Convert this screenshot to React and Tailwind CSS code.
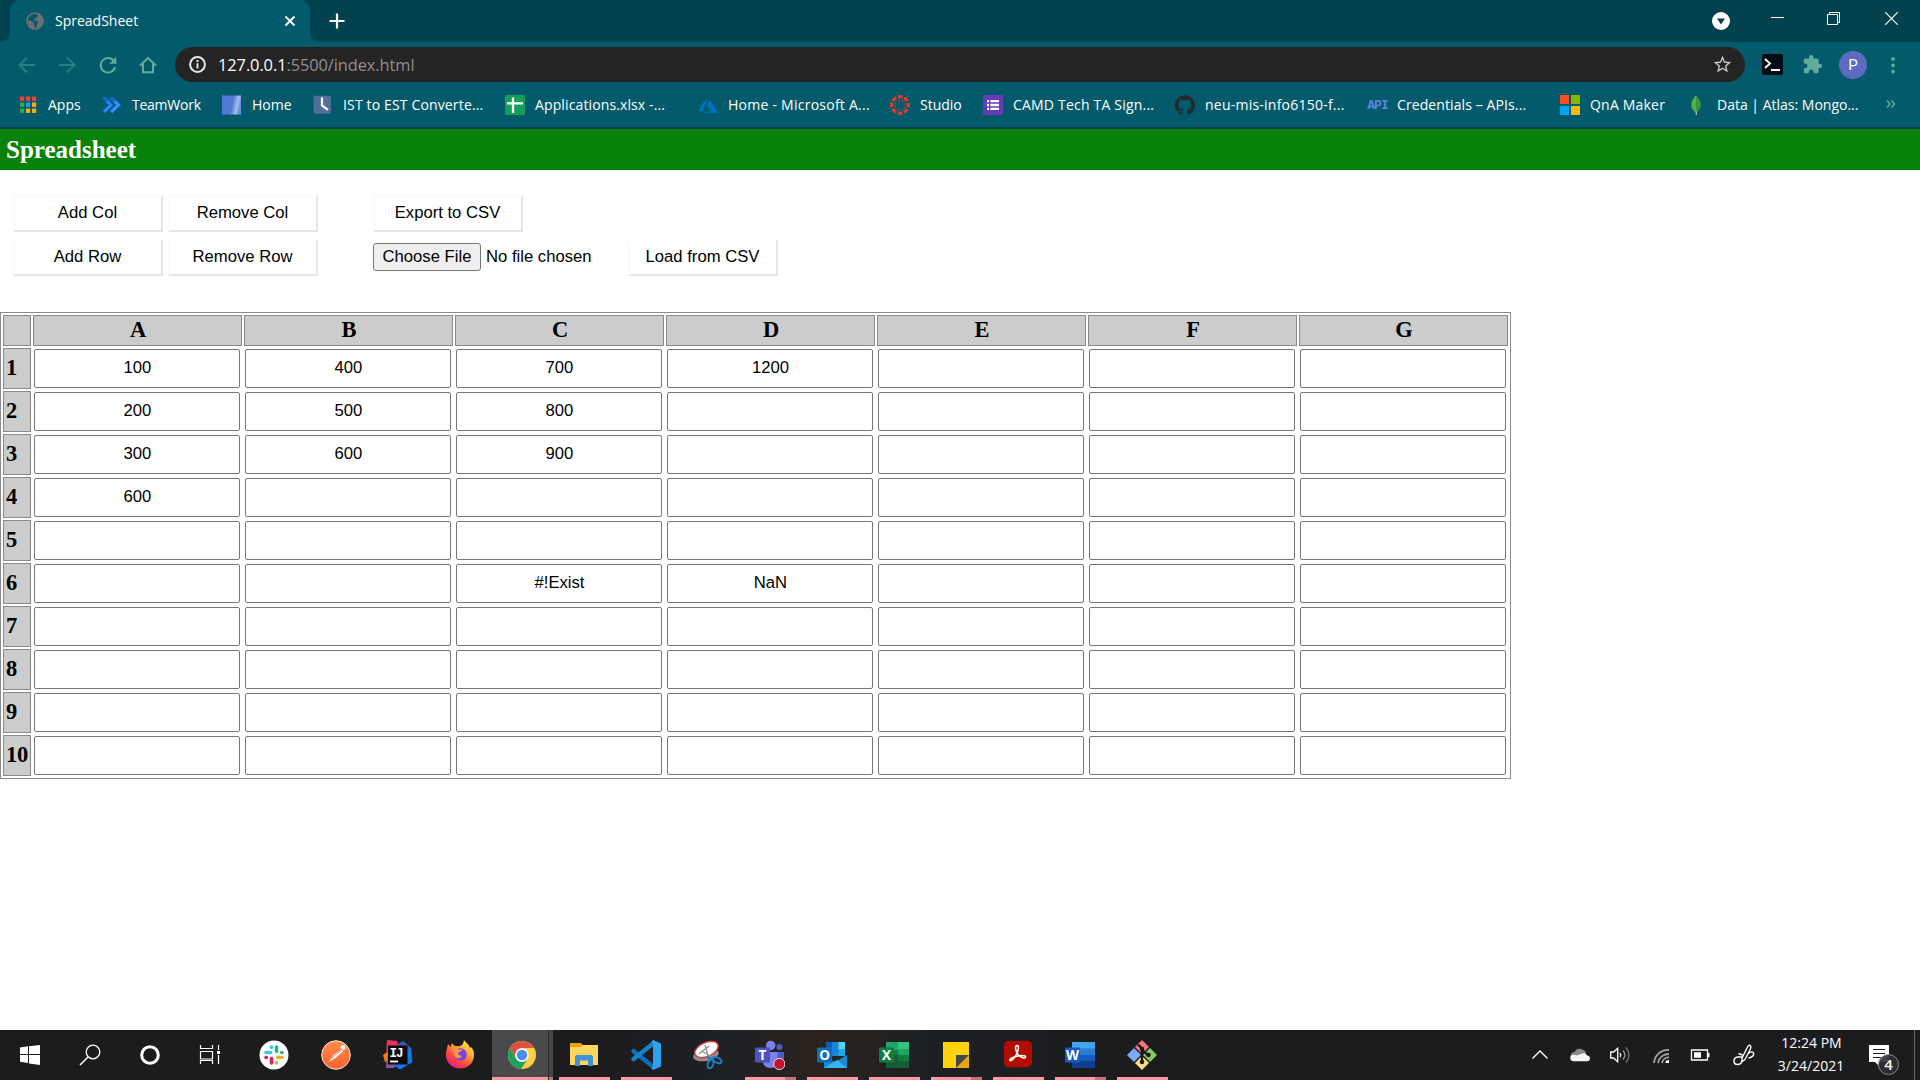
import React from "react";
import { SiGithub } from "react-icons/si";
import { MdExtension, MdStarBorder } from "react-icons/md";

const COLUMNS = ["A", "B", "C", "D", "E", "F", "G"];
const ROWS = [
  ["100", "400", "700", "1200", "", "", ""],
  ["200", "500", "800", "", "", "", ""],
  ["300", "600", "900", "", "", "", ""],
  ["600", "", "", "", "", "", ""],
  ["", "", "", "", "", "", ""],
  ["", "", "#!Exist", "NaN", "", "", ""],
  ["", "", "", "", "", "", ""],
  ["", "", "", "", "", "", ""],
  ["", "", "", "", "", "", ""],
  ["", "", "", "", "", "", ""],
];

function Icon({ size = 20, box = 20, className = "", children }) {
  return (
    <svg width={size} height={size} viewBox={`0 0 ${box} ${box}`} fill="none" className={`shrink-0 ${className}`}>
      {children}
    </svg>
  );
}

/* ---------- Bookmark icons ---------- */

const APP_DOTS = [
  ["#ea4335", "#ea4335", "#ea4335"],
  ["#34a853", "#2196f3", "#fbab0b"],
  ["#34a853", "#fbab0b", "#fbab0b"],
];

const AppsIcon = () => (
  <Icon>
    {APP_DOTS.map((row, y) =>
      row.map((c, x) => <rect key={`${x}${y}`} x={2 + x * 6} y={1.5 + y * 6} width="4.2" height="4.4" fill={c} />)
    )}
  </Icon>
);
const TeamWorkIcon = () => (
  <Icon>
    <path d="M2 3l7 7-7 7" stroke="#2684ff" strokeWidth="3.2" />
    <path d="M9 3l7.500 7L9 17" stroke="#2f8fff" strokeWidth="3.2" />
    <path d="M1 2.500l4 4M8.500 2.500l4 4" stroke="#1560c8" strokeWidth="2.600" />
  </Icon>
);
const HomeIcon = () => (
  <Icon>
    <defs>
      <linearGradient id="homeGlow" x1="0" y1="0" x2="1" y2="0.2">
        <stop offset="0.6" stopColor="#5079d6" />
        <stop offset="0.88" stopColor="#a9c0ee" />
        <stop offset="1" stopColor="#6b8fe0" />
      </linearGradient>
    </defs>
    <rect x="0" y="0.500" width="19" height="19" fill="url(#homeGlow)" />
  </Icon>
);
const ClockIcon = () => (
  <Icon>
    <rect x="0.500" y="0.800" width="17.500" height="18" rx="2" fill="#50709b" />
    <path d="M9 2.500v8l6 4.300" stroke="#fff" strokeWidth="2.200" />
  </Icon>
);
const SheetsIcon = () => (
  <Icon>
    <rect width="20" height="20" rx="1.500" fill="#159e5a" />
    <path d="M8 2.500v15.500M2 8.300h16" stroke="#fff" strokeWidth="2.300" />
  </Icon>
);
const AzureIcon = () => (
  <Icon>
    <path d="M10.500 3L5 7.700 0.200 16.200h4.400z" fill="#0072c6" />
    <path d="M11.200 4.200L8.800 10.800l4.600 5.300-8.500 1.700H20z" fill="#0072c6" />
  </Icon>
);
const CanvasIcon = () => (
  <Icon>
    <circle cx="10" cy="10" r="8.300" stroke="#e33b2e" strokeWidth="3.300" strokeDasharray="4.700 1.818" strokeDashoffset="2.350" />
    <circle cx="10" cy="10" r="4.900" stroke="#e33b2e" strokeWidth="1.400" strokeDasharray="1.300 2.548" strokeDashoffset="-1.300" />
  </Icon>
);
const FormsIcon = () => (
  <Icon>
    <rect width="20" height="20" rx="1.200" fill="#673ab7" />
    <path d="M4 6.200h2M4 10h2M4 13.800h2M7.300 6.200H16M7.300 10H16M7.300 13.800H16" stroke="#fff" strokeWidth="2.300" />
  </Icon>
);
const ApiIcon = () => (
  <span className="flex w-5 shrink-0 justify-center pt-px pl-px font-['Liberation_Mono',monospace] text-[13px] leading-5 font-bold tracking-[-1px] text-[#5b84e0]">
    API
  </span>
);
const MicrosoftIcon = () => (
  <Icon>
    <path d="M0 0h9v9H0z" fill="#f25022" />
    <path d="M11 0h9v9h-9z" fill="#7fba00" />
    <path d="M0 11h9v9H0z" fill="#00a4ef" />
    <path d="M11 11h9v9h-9z" fill="#ffb900" />
  </Icon>
);
const MongoIcon = () => (
  <Icon>
    <path d="M9 0.300C6 4 4.300 6.500 4.300 10.200c0 3.300 2 5.600 4.700 7.300z" fill="#53b045" />
    <path d="M9 0.300c3.200 3.700 4.800 6.300 4.800 9.900 0 3.300-2 5.600-4.800 7.300z" fill="#3d9440" />
    <path d="M9.300 16v4" stroke="#a9b49b" strokeWidth="1.400" />
  </Icon>
);

const BOOKMARKS = [
  { label: "Apps", icon: <AppsIcon />, cls: "w-[84px]" },
  { label: "TeamWork", icon: <TeamWorkIcon />, cls: "w-[120px] tracking-[-0.250px]" },
  { label: "Home", icon: <HomeIcon />, cls: "w-[91px]" },
  { label: "IST to EST Converte...", icon: <ClockIcon />, cls: "w-[192px] tracking-[0.150px]" },
  { label: "Applications.xlsx -...", icon: <SheetsIcon />, cls: "w-[193px] tracking-[0.120px]" },
  { label: "Home - Microsoft A...", icon: <AzureIcon />, cls: "w-[192px] tracking-[0.250px]" },
  { label: "Studio", icon: <CanvasIcon />, cls: "w-[93px]" },
  { label: "CAMD Tech TA Sign...", icon: <FormsIcon />, cls: "w-[192px] tracking-[0.200px]" },
  { label: "neu-mis-info6150-f...", icon: <SiGithub size={20} className="shrink-0 text-[#24292e]" />, cls: "w-[192px] tracking-[0.230px]" },
  { label: "Credentials – APIs...", icon: <ApiIcon />, cls: "w-[193px] tracking-[0.100px]" },
  { label: "QnA Maker", icon: <MicrosoftIcon />, cls: "w-[127px] tracking-[0.200px]" },
  { label: "Data | Atlas: Mongo...", icon: <MongoIcon />, cls: "w-[198px]" },
];

/* ---------- Browser chrome ---------- */

function TabStrip() {
  return (
    <div className="flex h-[42px] bg-[#02424f]">
      <div className="flex w-[10px] items-end bg-[#035a6b]">
        <div className="h-full w-full rounded-br-[10px] bg-[#02424f]" />
      </div>
      <div className="bg-[#02424f]">
        <div className="flex h-full w-[300px] items-center rounded-t-[10px] bg-[#035a6b] pl-4">
          <Icon size={18} box={18}>
            <circle cx="9" cy="9" r="8.800" fill="#6d6e73" />
            <path d="M7.500 2C4 3 2.300 5 2 8.500c2 .5 4 .5 5 1.500s-.5 1.500 1 2.500c1 .7-.5 3 1 3.500 3-1 1-3.500 3-5 1-1-.5-2.500-2-2.500H7.500C8 6.500 10 7 10.500 5.500s2-1 1.500-2c-1-1-3-2-4.500-1.500z" fill="#07586a" />
          </Icon>
          <span className="ml-[11px] w-[229px] pb-[2px] text-[14px] text-white">SpreadSheet</span>
          <Icon size={12} box={12}>
            <path d="M1.500 1.500l9 9M10.500 1.500l-9 9" stroke="#fff" strokeWidth="1.900" />
          </Icon>
        </div>
      </div>
      <div className="w-[10px] bg-[#035a6b]">
        <div className="h-full w-full rounded-bl-[10px] bg-[#02424f]" />
      </div>
      <div className="flex w-[34px] items-center justify-center">
        <Icon size={16} box={16}>
          <path d="M8 .5v15M.5 8h15" stroke="#fff" strokeWidth="2.200" />
        </Icon>
      </div>
      <div className="ml-auto flex">
        <div className="flex w-[56px] items-center justify-center">
          <Icon size={18} box={18}>
            <circle cx="9" cy="9" r="9" fill="#fff" />
            <path d="M5 6.500h8l-4 6z" fill="#02424f" />
          </Icon>
        </div>
        <div className="flex w-[57px] justify-center pt-3">
          <Icon size={13} box={13} className="ml-[-1px]">
            <path d="M0 5.500h13" stroke="#fff" />
          </Icon>
        </div>
        <div className="flex w-[57px] justify-center pt-3">
          <Icon size={13} box={13} className="ml-[-3px]">
            <path d="M.5 2.500h10v10H.500zM2.500 2.500v-2h10v10h-2" stroke="#fff" />
          </Icon>
        </div>
        <div className="flex w-[57px] justify-center pt-3">
          <Icon size={13} box={13}>
            <path d="M.3.300l12.400 12.400M12.700.3L.3 12.700" stroke="#fff" strokeWidth="1.200" />
          </Icon>
        </div>
      </div>
    </div>
  );
}

function Toolbar() {
  return (
    <div className="flex h-[45px] items-center bg-[#035a6b] pl-[7px]">
      <div className="flex w-10 justify-center">
        <Icon size={18} box={18} className="text-[#2b7f84]">
          <path d="M17 9H2M9 1.500L1.500 9 9 16.500" stroke="currentColor" strokeWidth="1.900" />
        </Icon>
      </div>
      <div className="flex w-10 justify-center">
        <Icon size={18} box={18} className="text-[#2b7f84]">
          <path d="M1 9h15M9 1.500L16.500 9 9 16.500" stroke="currentColor" strokeWidth="1.900" />
        </Icon>
      </div>
      <div className="flex w-[41px] justify-center">
        <Icon size={18} box={18} className="text-[#60ab9a]">
          <path d="M15.300 5.500A7.300 7.300 0 1 0 16.100 11" stroke="currentColor" strokeWidth="2" />
          <path d="M17.300.8v7h-7z" fill="currentColor" />
        </Icon>
      </div>
      <div className="flex w-[39px] justify-center">
        <Icon size={18} box={18} className="text-[#60ab9a]">
          <path d="M1 9.700L9 2l8 7.700M4 8v8.300h10V8" stroke="currentColor" strokeWidth="2" />
        </Icon>
      </div>
      <div className="ml-[8px] flex h-[35px] w-[1570px] items-center rounded-full bg-[#242424] pr-[12px] pl-[14px]">
        <Icon size={17} box={17}>
          <circle cx="8.500" cy="8.500" r="7.400" stroke="#e8e8e8" strokeWidth="2" />
          <path d="M8.500 4v2M8.500 7.300v5.200" stroke="#e8e8e8" strokeWidth="1.900" />
        </Icon>
        <span className="ml-3 pt-px text-[16.400px] leading-none tracking-[-0.080px] text-white">
          127.0.0.1<span className="text-[#8f8f8f]">:5500/index.html</span>
        </span>
        <MdStarBorder size={21} className="ml-auto text-[#c6c6c6]" />
      </div>
      <Icon size={21} box={21} className="ml-[17px]">
        <rect width="21" height="21" rx="1.500" fill="#050b14" />
        <path d="M3 5l5 4.500L3 14" stroke="#fff" strokeWidth="1.900" />
        <path d="M9 16h9" stroke="#fff" strokeWidth="2" />
      </Icon>
      <MdExtension size={21} className="ml-[19px] text-[#60ab9a]" />
      <div className="ml-[16px] flex size-7 items-center justify-center rounded-full bg-[#5c6bc0] pt-px font-['Roboto',sans-serif] text-[15px] text-white">
        P
      </div>
      <Icon size={18} box={18} className="ml-[17px] text-[#60ab9a]">
        <circle cx="9" cy="3" r="1.900" fill="currentColor" />
        <circle cx="9" cy="9.300" r="1.900" fill="currentColor" />
        <circle cx="9" cy="15.600" r="1.900" fill="currentColor" />
      </Icon>
    </div>
  );
}

function BookmarkBar() {
  return (
    <div className="flex h-[42px] border-b-2 border-[#073f4f] bg-[#035a6b] pl-[18px]">
      {BOOKMARKS.map((b) => (
        <div key={b.label} className={`flex h-[36px] shrink-0 items-center gap-[10px] text-[14px] whitespace-nowrap text-white ${b.cls}`}>
          {b.icon}
          <span className="pb-[2px]">{b.label}</span>
        </div>
      ))}
      <Icon size={10} box={10} className="mt-[12px] ml-[1px]">
        <path d="M1 1.500L4 5 1 8.500M5.500 1.500L8.500 5l-3 3.500" stroke="#60ab9a" strokeWidth="1.500" />
      </Icon>
    </div>
  );
}

/* ---------- Page ---------- */

function ActionButton({ children, className = "" }) {
  return (
    <button
      className={`flex w-[150px] items-center justify-center border-2 border-t-[#fbfbfb] border-r-[#e6e6e6] border-b-[#e6e6e6] border-l-[#fbfbfb] bg-white pr-px text-[16.667px] leading-none text-black ${className}`}
    >
      {children}
    </button>
  );
}

function Actions() {
  return (
    <div className="flex flex-col gap-[7px] pt-[25px] pl-[13px] font-['Liberation_Sans',Arial,sans-serif]">
      <div className="flex h-[37px]">
        <ActionButton>Add Col</ActionButton>
        <ActionButton className="ml-[5px]">Remove Col</ActionButton>
        <ActionButton className="ml-[55px]">Export to CSV</ActionButton>
      </div>
      <div className="flex h-[37px]">
        <ActionButton>Add Row</ActionButton>
        <ActionButton className="ml-[5px]">Remove Row</ActionButton>
        <div className="ml-[55px] flex w-[255px] items-center gap-[5px] text-[16.667px] leading-none text-black">
          <button className="mb-px h-7 w-[108px] rounded-[3px] border border-[#767676] bg-[#efefef] whitespace-nowrap">Choose File</button>
          <span className="mb-px">No file chosen</span>
        </div>
        <ActionButton>Load from CSV</ActionButton>
      </div>
    </div>
  );
}

function Sheet() {
  return (
    <div className="mt-[36px] flex w-[1511px] flex-col gap-[2px] border border-[#8a8a8a] p-[2px] font-['Liberation_Serif',serif] text-[22.500px] leading-none font-bold text-black">
      <div className="flex gap-[2px]">
        <div className="h-[31px] w-7 border border-[#8a8a8a] bg-[#cccccc]" />
        {COLUMNS.map((c) => (
          <div key={c} className="flex h-[31px] w-[209px] items-center justify-center border border-[#8a8a8a] bg-[#cccccc] pl-px">
            {c}
          </div>
        ))}
      </div>
      {ROWS.map((row, r) => (
        <div key={r} className="flex gap-[2px]">
          <div className="flex h-[41px] w-7 items-center border border-[#8a8a8a] bg-[#cccccc] pb-px pl-[2px] tracking-[-0.300px]">{r + 1}</div>
          {row.map((v, c) => (
            <div key={c} className="h-[41px] w-[209px] p-px">
              <div className="flex h-[39px] w-[206px] items-center justify-center rounded-[2px] border border-[#767676] pl-px font-['Liberation_Sans',Arial,sans-serif] text-[16.667px] font-normal">
                {v}
              </div>
            </div>
          ))}
        </div>
      ))}
    </div>
  );
}

/* ---------- Taskbar icons (30px boxes) ---------- */

const T = ({ children }) => (
  <Icon size={30} box={30}>
    {children}
  </Icon>
);

const Letter = ({ children, y = 20 }) => (
  <text x="7.500" y={y} textAnchor="middle" fill="#fff" className="font-['Open_Sans',sans-serif] text-[13.500px] font-bold">
    {children}
  </text>
);

const WindowsIcon = () => (
  <T>
    <path d="M5 7.500l8-1.200V14H5zM14 6.200L25 5v9H14zM5 15h8v8l-8-1.200zM14 15h11v10l-11-1.600z" fill="#fff" />
  </T>
);
const SearchIcon = () => (
  <T>
    <circle cx="18" cy="12" r="6.800" stroke="#fff" strokeWidth="1.300" />
    <path d="M13 17l-8 8" stroke="#fff" strokeWidth="1.400" />
  </T>
);
const CortanaIcon = () => (
  <T>
    <circle cx="15" cy="15" r="8.300" stroke="#fff" strokeWidth="3" />
  </T>
);
const TaskViewIcon = () => (
  <T>
    <path d="M5.500 5v3.500h12V5M5.500 24v-3.500h12V24M5.500 11.500h12v7.500h-12zM23.500 5v5M23.500 15v9" stroke="#fff" strokeWidth="1.200" />
    <path d="M22 11h3v3h-3z" fill="#fff" />
  </T>
);
const SlackIcon = () => (
  <T>
    <circle cx="15" cy="15" r="14.500" fill="#fff" />
    <g strokeWidth="3.600" strokeLinecap="round">
      <path d="M7 12.500h4.500M12.500 7v.4" stroke="#36c5f0" />
      <path d="M17.500 7v4.500M22.600 12.500h.4" stroke="#2eb67d" />
      <path d="M18.500 17.500H23M17.500 22.600v.4" stroke="#ecb22e" />
      <path d="M12.500 18.500V23M7 17.500h.4" stroke="#e01e5a" />
    </g>
  </T>
);
const PostmanIcon = () => (
  <T>
    <defs>
      <linearGradient id="pm" x1="0" y1="0" x2="0" y2="1">
        <stop stopColor="#ff8d4a" />
        <stop offset="1" stopColor="#ff5f2e" />
      </linearGradient>
    </defs>
    <circle cx="15" cy="15" r="14.300" fill="url(#pm)" stroke="#ffe8dc" />
    <circle cx="22" cy="7.500" r="2.400" fill="#fff" />
    <path d="M20.500 9L12 15l-5 8 8-5 7.500-6.500zM11 18l9-7.500" fill="#fff" stroke="#e8754a" strokeWidth="0.800" />
  </T>
);
const IntelliJIcon = () => (
  <T>
    <path d="M4 0l10 1 3 12L3 17z" fill="#f0315f" />
    <path d="M0 15l4-3 3 9-5 1z" fill="#f97a12" />
    <path d="M4 17l11 6-4 5-8 0z" fill="#9b4f9e" />
    <path d="M14 5l6-4 8 7 1.500 14L17 29.500l-8-5z" fill="#0d78e8" />
    <path d="M14 5l6-4 7 6-7 8z" fill="#3a55b4" />
    <path d="M5 5.500h19.500v19H5z" fill="#0a0a0a" />
    <text x="6.500" y="16.500" fill="#fff" className="font-['Liberation_Mono',monospace] text-[12.500px] font-bold tracking-[-1px]">
      IJ
    </text>
    <path d="M7 21.500h8" stroke="#fff" strokeWidth="1.800" />
  </T>
);
const FirefoxIcon = () => (
  <T>
    <defs>
      <linearGradient id="ffx" x1="0.900" y1="0" x2="0.200" y2="1">
        <stop stopColor="#fff44f" />
        <stop offset="0.350" stopColor="#ffb02e" />
        <stop offset="0.650" stopColor="#ff4f3b" />
        <stop offset="1" stopColor="#e31587" />
      </linearGradient>
    </defs>
    <path d="M19 0c-1 3 0 4-4 6-2 .5-3 0-4 0-2 0-3-2-4-3-1 2-1 2.500-1 4L3 4C2 9 1 11 1 15c0 8 6 13.500 14 13.500S29 23 29 15c0-4-1-6-3-8l-1 1c-1-4-4-5-6-8z" fill="url(#ffx)" />
    <circle cx="15.500" cy="14.500" r="6.200" fill="#7542e5" />
    <path d="M6 7.500c3-1.500 6 0 7.500 2h4c-.5 2-3 2-4 3-1.500 1.500 1 3.500 3 3 1 2-3 3.500-5 2.500C8 16 9 12 6 7.500z" fill="#ff9640" />
  </T>
);
const ChromeIcon = () => (
  <T>
    <circle cx="15" cy="15" r="14" fill="#ffcd46" />
    <path d="M2.900 8A14 14 0 0 1 27.100 8H15A7 7 0 0 0 9 18.500z" fill="#dd5144" />
    <path d="M2.900 8A14 14 0 0 0 14 29L21 18.500a7 7 0 0 1-12.100 0z" fill="#1aa15f" />
    <circle cx="15" cy="15" r="6.700" fill="#fff" />
    <circle cx="15" cy="15" r="5.200" fill="#4c8bf5" />
  </T>
);
const ExplorerIcon = () => (
  <T>
    <path d="M1 3h11l2.500 3H28v8H1z" fill="#e8a317" />
    <path d="M1 7h11l2-2h15v20H1z" fill="#ffd75e" />
    <path d="M6 26V17.500q0-2.500 2.500-2.500h13q2.500 0 2.500 2.500V26h-5v-5.500h-8V26z" fill="#3f93d6" />
  </T>
);
const VsCodeIcon = () => (
  <T>
    <path d="M0 10.500l2.500-2.200L23 24.500V30L1 13z" fill="#0a6fb8" />
    <path d="M0 19.500l2.500 2.200L23 5.500V0L1 17.500z" fill="#1485cf" />
    <path d="M22 0l8 3.500v23L22 30l-1.500-1.500L22 26V4l-1.500-2.500z" fill="#2da3f0" />
  </T>
);
const SnipIcon = () => (
  <T>
    <ellipse cx="13" cy="15" rx="13" ry="6" transform="rotate(-10 13 15)" fill="#8d8f92" />
    <ellipse cx="13.500" cy="9.500" rx="12.500" ry="7" transform="rotate(-24 13.500 9.500)" fill="#fff" stroke="#d3353c" strokeWidth="1.400" />
    <path d="M12 5l3.500 13M6 14l10-8M8 11l10 5" stroke="#8f9396" strokeWidth="1.300" />
    <g stroke="#1f7fbe" strokeWidth="2">
      <ellipse cx="17.500" cy="24" rx="2.700" ry="4.500" transform="rotate(22 17.500 24)" />
      <ellipse cx="24" cy="20" rx="4.800" ry="2.500" transform="rotate(28 24 20)" />
      <path d="M14 17l5 2" />
    </g>
  </T>
);
const TeamsIcon = () => (
  <T>
    <circle cx="24.500" cy="7" r="3" fill="#5059c9" />
    <circle cx="15.700" cy="5.500" r="4.700" fill="#7b83eb" />
    <path d="M20 12h9v9q0 4-5 4z" fill="#5059c9" />
    <path d="M8 12h14.500v9q0 7-7 7-7.500 0-7.500-7z" fill="#7b83eb" />
    <rect x="0" y="7.500" width="15" height="15" rx="1.200" fill="#4b53bc" />
    <Letter>T</Letter>
    <circle cx="24.300" cy="24" r="5.600" fill="#c4112f" stroke="#f1d3d8" />
  </T>
);
const OutlookIcon = () => (
  <T>
    <path d="M9 2h19v14H9z" fill="#0a5fb4" />
    <path d="M15 2h6.500v7H15zM15 9h6.500v7H15z" fill="#1685d8" />
    <path d="M21.500 2H28v7h-6.500z" fill="#50d9ff" />
    <path d="M21.500 9H28v7h-6.500z" fill="#28a8ea" />
    <path d="M7 17l11 5 12-7v13H7z" fill="#1a8ad6" />
    <path d="M7 28l13-8 10 8z" fill="#35b5f0" />
    <rect x="0" y="7.500" width="15" height="15" rx="1.200" fill="#0f6cbd" />
    <Letter>O</Letter>
  </T>
);
const ExcelIcon = () => (
  <T>
    <path d="M7 2h12v9H7z" fill="#21a366" />
    <path d="M19 2h11v9H19z" fill="#33c481" />
    <path d="M7 10h12v6H7z" fill="#107c41" />
    <path d="M19 9h11v6H19z" fill="#21a366" />
    <path d="M7 15h23v13H7z" fill="#185c37" />
    <path d="M19 15h11v6H19z" fill="#107c41" />
    <rect x="0" y="7.500" width="15" height="15" rx="1.200" fill="#107c41" />
    <Letter>X</Letter>
  </T>
);
const NotesIcon = () => (
  <T>
    <path d="M2 2h26v26H2z" fill="#ffd30b" />
    <path d="M28 15v13H15z" fill="#e8a80c" />
    <path d="M15 15h13L15 28z" fill="#45464a" />
  </T>
);
const AcrobatIcon = () => (
  <T>
    <rect x="1" y="0.800" width="28" height="26.400" rx="5" fill="#b30b00" />
    <path d="M14 5.500c2.500 0 1.500 5-1 9.500s-5 6.500-6 5.500 2.500-3.500 8-4.500 8-.2 7.500 1.300-4 .7-7-2.300-4-9.500-1.500-9.500z" stroke="#fff" strokeWidth="1.500" />
  </T>
);
const WordIcon = () => (
  <T>
    <path d="M7 2h23v7H7z" fill="#41a5ee" />
    <path d="M7 8.500h23V15H7z" fill="#2b7cd3" />
    <path d="M7 15h23v6.500H7z" fill="#185abd" />
    <path d="M7 21.500h23V28H7z" fill="#103f91" />
    <rect x="0" y="7.500" width="15" height="15" rx="1.200" fill="#185abd" />
    <Letter>W</Letter>
  </T>
);
const GitIcon = () => (
  <T>
    <path d="M15 0l7 7-7 7-7-7z" fill="#f37474" />
    <path d="M23 8l7 7-7 7-7-7z" fill="#8acb5e" />
    <path d="M7 8l7 7-7 7-7-7z" fill="#7baaf7" />
    <path d="M15 16l7 7-7 7-7-7z" fill="#fbe083" />
    <path d="M11 4.500l4 4V21M15 10l6 5" stroke="#17181b" strokeWidth="2.300" />
    <circle cx="15" cy="9" r="2.200" fill="#17181b" />
    <circle cx="15" cy="22" r="2.300" fill="#17181b" />
    <circle cx="21.500" cy="15" r="2.300" fill="#17181b" />
  </T>
);

const TASKS = [
  { id: "slack", icon: <SlackIcon /> },
  { id: "postman", icon: <PostmanIcon /> },
  { id: "intellij", icon: <IntelliJIcon /> },
  { id: "firefox", icon: <FirefoxIcon /> },
  { id: "chrome", icon: <ChromeIcon />, active: true },
  { id: "explorer", icon: <ExplorerIcon />, open: "single" },
  { id: "vscode", icon: <VsCodeIcon />, open: "single" },
  { id: "snip", icon: <SnipIcon /> },
  { id: "teams", icon: <TeamsIcon />, open: "stack" },
  { id: "outlook", icon: <OutlookIcon />, open: "single" },
  { id: "excel", icon: <ExcelIcon />, open: "single" },
  { id: "notes", icon: <NotesIcon />, open: "stack" },
  { id: "acrobat", icon: <AcrobatIcon />, open: "single" },
  { id: "word", icon: <WordIcon />, open: "stack" },
  { id: "git", icon: <GitIcon />, open: "single" },
];

function TaskButton({ icon, active, open }) {
  if (active) {
    return (
      <div className="flex w-[62px] pl-px">
        <div className="flex w-14 flex-col items-center bg-[#4a4a4c]">
          <div className="flex h-[47px] items-center pt-[3px] pl-[3px]">{icon}</div>
          <div className="h-[3px] w-full bg-[#ff98a3]" />
        </div>
        <div className="flex w-[5px] flex-col justify-end border-l border-[#2d2d2f] bg-[#454547]">
          <div className="h-[3px] bg-[#c4727b]" />
        </div>
      </div>
    );
  }
  return (
    <div className="flex w-[62px] flex-col items-center">
      <div className="flex h-[47px] items-center pt-[3px]">{icon}</div>
      {open && (
        <div className="flex h-[3px] w-[51px] bg-[#ff98a3]">
          {open === "stack" && <div className="ml-auto w-[11px] bg-[#c4727b]" />}
        </div>
      )}
    </div>
  );
}

function Tray() {
  return (
    <div className="ml-auto flex items-center">
      <div className="flex w-10 justify-center">
        <Icon size={18} box={18}>
          <path d="M1.500 12.500L9 5l7.500 7.500" stroke="#fff" strokeWidth="1.400" />
        </Icon>
      </div>
      <div className="flex w-10 justify-center">
        <Icon>
          <path d="M1 12.500A4 4 0 0 1 4.500 7 6 6 0 0 1 14 5.500c2 1 2 2.500 2 4L6 14z" fill="#8a8a8a" />
          <path d="M3 16.300a3.300 3.300 0 0 1 0-6.500c1.500-.3 3 .2 4 .7L13 8.300c2-.5 3.500.7 4 2.200 1.800 0 3 1.200 3 3s-1.200 2.800-2.800 2.800z" fill="#f5f5f5" />
        </Icon>
      </div>
      <div className="flex w-10 justify-center">
        <Icon>
          <path d="M.7 7v6h3l4 3.700V3.300L3.700 7z" stroke="#fff" strokeWidth="1.300" />
          <path d="M10 8q1.500 2 0 4" stroke="#eee" strokeWidth="1.300" />
          <path d="M13 5.500q4 4.500 0 9" stroke="#999" strokeWidth="1.300" />
          <path d="M16 2.500q6 7.500 0 15" stroke="#777" strokeWidth="1.300" />
        </Icon>
      </div>
      <div className="flex w-10 justify-center">
        <Icon size={18} box={18} className="ml-px">
          <path d="M2 17A14 14 0 0 1 17 4M6 17A10.500 10.500 0 0 1 17 8M10 17a6.500 6.500 0 0 1 7-5.500" stroke="#a3a3a3" strokeWidth="1.800" />
          <path d="M13.500 17v-1.500q1.500-2 3.500-1.500v3z" fill="#fff" />
        </Icon>
      </div>
      <div className="flex w-10 justify-center">
        <Icon>
          <path d="M1.500 5h16v10h-16z" stroke="#fff" strokeWidth="1.300" />
          <path d="M4 7.200h7v5.600H4zM18 8h1.500v4H18z" fill="#fff" />
        </Icon>
      </div>
      <div className="flex w-[48px] justify-center">
        <Icon size={22} box={22}>
          <path
            d="M8.500 18l.8-4.500L14.500 3q1.500-2.500 2.700-1.500t.2 3.500L12 15.500zM5.500 9.500L9.500 11M9 13H5q-4 .5-4 4t3.500 3.500T9 17.500M15 9.500q4.500-3 5.500-.5t-3 4.500l-2 .5"
            stroke="#fff"
            strokeWidth="1.400"
            strokeLinejoin="round"
          />
        </Icon>
      </div>
      <div className="flex w-[86px] flex-col items-center text-[14px] text-white">
        <span className="pl-px leading-[22px]">12:24 PM</span>
        <span className="leading-[24px]">3/24/2021</span>
      </div>
      <div className="relative flex w-[60px] pl-[15px]">
        <Icon size={22} box={22}>
          <path d="M0 1h20v17H10v4l-4-4H0z" fill="#fff" />
          <path d="M4 5.500h12M4 9.500h12M4 13.500h8" stroke="#1d1d1f" strokeWidth="1.200" />
        </Icon>
        <span className="absolute top-[10px] left-[24px] flex size-[21px] items-center justify-center rounded-full border border-[#8b8b8b] bg-[#2f2f31]/90 text-[15px] font-semibold text-white">
          4
        </span>
      </div>
      <div className="h-[50px] w-[6px] border-l border-[#6a6a6c]" />
    </div>
  );
}

function Taskbar() {
  return (
    <div className="flex h-[50px] bg-[#1c1c1e] bg-[linear-gradient(90deg,#1c1c1e_0px,#1c1c1e_600px,#1d2025_720px,#2b231d_820px,#1d2023_930px,#1c1c1e_1100px)]">
      {[WindowsIcon, SearchIcon, CortanaIcon, TaskViewIcon].map((I, i) => (
        <div key={i} className="flex w-[60px] items-center justify-center">
          <I />
        </div>
      ))}
      <div className="flex pl-[3px]">
        {TASKS.map(({ id, ...t }) => (
          <TaskButton key={id} {...t} />
        ))}
      </div>
      <Tray />
    </div>
  );
}

export default function App() {
  return (
    <div className="flex h-[1080px] w-[1920px] flex-col overflow-hidden bg-white font-['Open_Sans',sans-serif]">
      <TabStrip />
      <Toolbar />
      <BookmarkBar />
      <h1 className="flex h-[41px] items-center border-b border-[#027502] bg-[#088208] pl-[6px] font-['Liberation_Serif',serif] text-[25px] leading-none font-bold text-white">
        Spreadsheet
      </h1>
      <main className="flex-1">
        <Actions />
        <Sheet />
      </main>
      <Taskbar />
    </div>
  );
}
